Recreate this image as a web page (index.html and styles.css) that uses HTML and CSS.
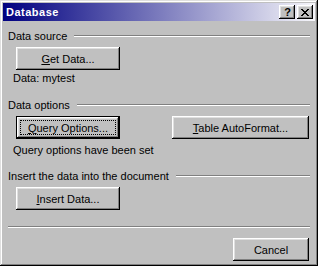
FILE: index.html
```html
<!DOCTYPE html>
<html>
<head>
<meta charset="utf-8">
<link rel="stylesheet" href="styles.css">
</head>
<body>
<div class="window">
  <div class="titlebar">
    <span class="title">Database</span>
    <div class="tbtns">
      <div class="tbtn help">?</div>
      <div class="tbtn close">
        <svg width="8" height="7" viewBox="0 0 8 7" shape-rendering="crispEdges">
          <path d="M0 0h2v1h-2zM6 0h2v1h-2zM1 1h2v1h-2zM5 1h2v1h-2zM2 2h4v1h-4zM3 3h2v1h-2zM2 4h4v1h-4zM1 5h2v1h-2zM5 5h2v1h-2zM0 6h2v1h-2zM6 6h2v1h-2z" fill="#000"/>
        </svg>
      </div>
    </div>
  </div>
  <div class="content">
    <div class="ghead g1"><span>Data source</span><span class="etch"></span></div>
    <div class="brow b1"><div class="btn wide"><span><u>G</u>et Data...</span></div></div>
    <div class="note n1">Data: mytest</div>

    <div class="ghead g2"><span>Data options</span><span class="etch"></span></div>
    <div class="brow b2">
      <div class="btn wide default"><span><u>Q</u>uery Options...</span></div>
      <div class="btn table"><span><u>T</u>able AutoFormat...</span></div>
    </div>
    <div class="note n2">Query options have been set</div>

    <div class="ghead g3"><span>Insert the data into the document</span><span class="etch"></span></div>
    <div class="brow b3"><div class="btn wide"><span><u>I</u>nsert Data...</span></div></div>

    <div class="etch full"></div>
    <div class="footer"><div class="btn cancel"><span>Cancel</span></div></div>
  </div>
</div>
</body>
</html>
```

FILE: styles.css
```css
* { box-sizing: border-box; }
html, body { margin: 0; padding: 0; background: #c0c0c0; }
body {
  font-family: "Liberation Sans", Arial, sans-serif;
  font-size: 11px;
  color: #000;
}
.window {
  width: 318px;
  height: 266px;
  padding: 3px;
  background: #c0c0c0;
  box-shadow: inset -1px -1px #000, inset 1px 1px #dfdfdf, inset -2px -2px #808080, inset 2px 2px #fff;
  display: flex;
  flex-direction: column;
}
.titlebar {
  height: 18px;
  display: flex;
  align-items: center;
  justify-content: space-between;
  padding: 0 2px 0 3px;
  background: linear-gradient(to right, #000080, #f6f6fa);
}
.title {
  color: #fff;
  font-weight: bold;
  font-size: 11px;
  line-height: 18px;
  letter-spacing: 0.5px;
}
.tbtns { display: flex; gap: 2px; }
.tbtn {
  width: 16px;
  height: 14px;
  background: #c0c0c0;
  box-shadow: inset -1px -1px #000, inset 1px 1px #fff, inset -2px -2px #808080, inset 2px 2px #dfdfdf;
  display: flex;
  align-items: center;
  justify-content: center;
}
.tbtn.help {
  font-weight: bold;
  font-size: 11px;
  line-height: 14px;
  padding-left: 1px;
}
.tbtn.close svg { display: block; }

.content {
  flex: 1;
  display: flex;
  flex-direction: column;
  padding: 9px 5px 0 5px;
}
.ghead {
  display: flex;
  line-height: 13px;
  height: 13px;
  white-space: nowrap;
}
.ghead .etch { flex: 1; margin: 5px 0 0 7px; }
.etch {
  height: 2px;
  border-top: 1px solid #808080;
  border-bottom: 1px solid #fff;
}
.g2 { margin-top: 14px; }
.g3 { margin-top: 13px; }
.brow { display: flex; padding-left: 8px; padding-right: 1px; }
.b1, .b2, .b3 { margin-top: 4px; }
.note { line-height: 13px; height: 13px; padding-left: 5px; }
.n1 { margin-top: 2px; }
.n2 { margin-top: 5px; }

.btn {
  height: 23px;
  background: #c0c0c0;
  box-shadow: inset -1px -1px #000, inset 1px 1px #fff, inset -2px -2px #808080, inset 2px 2px #dfdfdf;
  display: flex;
  align-items: center;
  justify-content: center;
  line-height: 13px;
  white-space: nowrap;
}
.btn span { padding-top: 1px; }
.btn.wide { width: 104px; }
.btn.default {
  border: 1px solid #000;
  outline: 1px dotted #000;
  outline-offset: -5px;
}
.btn.table { width: 137px; margin-left: auto; }
.etch.full { margin-top: 16px; }
.footer { display: flex; justify-content: flex-end; margin-top: 10px; padding-right: 1px; }
.btn.cancel { width: 76px; }
```
